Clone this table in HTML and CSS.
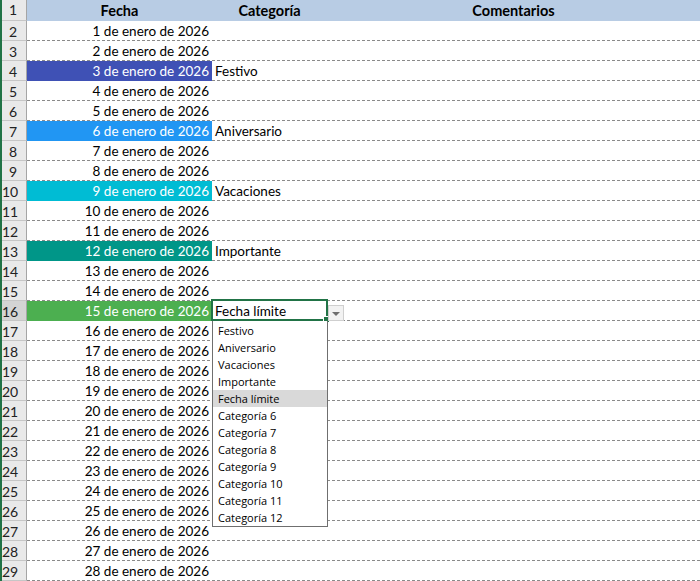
FILE: index.html
```html
<!DOCTYPE html>
<html lang="es">
<head>
<meta charset="utf-8">
<title>Calendario</title>
<link rel="stylesheet" href="styles.css">
</head>
<body>
<div class="page">
  <div class="sheet">
    <div class="row head"><div class="rh">1</div><div class="c date">Fecha</div><div class="c cat">Categoría</div><div class="c com">Comentarios</div></div>
    <div class="row"><div class="rh">2</div><div class="c date">1 de enero de 2026</div><div class="c cat"></div><div class="c com"></div></div>
    <div class="row"><div class="rh">3</div><div class="c date">2 de enero de 2026</div><div class="c cat"></div><div class="c com"></div></div>
    <div class="row"><div class="rh">4</div><div class="c date fill-indigo">3 de enero de 2026</div><div class="c cat">Festivo</div><div class="c com"></div></div>
    <div class="row"><div class="rh">5</div><div class="c date">4 de enero de 2026</div><div class="c cat"></div><div class="c com"></div></div>
    <div class="row"><div class="rh">6</div><div class="c date">5 de enero de 2026</div><div class="c cat"></div><div class="c com"></div></div>
    <div class="row"><div class="rh">7</div><div class="c date fill-blue">6 de enero de 2026</div><div class="c cat">Aniversario</div><div class="c com"></div></div>
    <div class="row"><div class="rh">8</div><div class="c date">7 de enero de 2026</div><div class="c cat"></div><div class="c com"></div></div>
    <div class="row"><div class="rh">9</div><div class="c date">8 de enero de 2026</div><div class="c cat"></div><div class="c com"></div></div>
    <div class="row"><div class="rh">10</div><div class="c date fill-cyan">9 de enero de 2026</div><div class="c cat">Vacaciones</div><div class="c com"></div></div>
    <div class="row"><div class="rh">11</div><div class="c date">10 de enero de 2026</div><div class="c cat"></div><div class="c com"></div></div>
    <div class="row"><div class="rh">12</div><div class="c date">11 de enero de 2026</div><div class="c cat"></div><div class="c com"></div></div>
    <div class="row"><div class="rh">13</div><div class="c date fill-teal">12 de enero de 2026</div><div class="c cat">Importante</div><div class="c com"></div></div>
    <div class="row"><div class="rh">14</div><div class="c date">13 de enero de 2026</div><div class="c cat"></div><div class="c com"></div></div>
    <div class="row"><div class="rh">15</div><div class="c date">14 de enero de 2026</div><div class="c cat"></div><div class="c com"></div></div>
    <div class="row sel"><div class="rh">16</div><div class="c date fill-green">15 de enero de 2026</div><div class="c cat">Fecha límite</div><div class="c com"></div></div>
    <div class="row"><div class="rh">17</div><div class="c date">16 de enero de 2026</div><div class="c cat"></div><div class="c com"></div></div>
    <div class="row"><div class="rh">18</div><div class="c date">17 de enero de 2026</div><div class="c cat"></div><div class="c com"></div></div>
    <div class="row"><div class="rh">19</div><div class="c date">18 de enero de 2026</div><div class="c cat"></div><div class="c com"></div></div>
    <div class="row"><div class="rh">20</div><div class="c date">19 de enero de 2026</div><div class="c cat"></div><div class="c com"></div></div>
    <div class="row"><div class="rh">21</div><div class="c date">20 de enero de 2026</div><div class="c cat"></div><div class="c com"></div></div>
    <div class="row"><div class="rh">22</div><div class="c date">21 de enero de 2026</div><div class="c cat"></div><div class="c com"></div></div>
    <div class="row"><div class="rh">23</div><div class="c date">22 de enero de 2026</div><div class="c cat"></div><div class="c com"></div></div>
    <div class="row"><div class="rh">24</div><div class="c date">23 de enero de 2026</div><div class="c cat"></div><div class="c com"></div></div>
    <div class="row"><div class="rh">25</div><div class="c date">24 de enero de 2026</div><div class="c cat"></div><div class="c com"></div></div>
    <div class="row"><div class="rh">26</div><div class="c date">25 de enero de 2026</div><div class="c cat"></div><div class="c com"></div></div>
    <div class="row"><div class="rh">27</div><div class="c date">26 de enero de 2026</div><div class="c cat"></div><div class="c com"></div></div>
    <div class="row"><div class="rh">28</div><div class="c date">27 de enero de 2026</div><div class="c cat"></div><div class="c com"></div></div>
    <div class="row"><div class="rh">29</div><div class="c date">28 de enero de 2026</div><div class="c cat"></div><div class="c com"></div></div>
  </div>

  <div class="selection"><span class="handle"></span></div>
  <div class="dd-button"><span class="dd-arrow"></span></div>
  <ul class="dd-list">
    <li>Festivo</li>
    <li>Aniversario</li>
    <li>Vacaciones</li>
    <li>Importante</li>
    <li class="active">Fecha límite</li>
    <li>Categoría 6</li>
    <li>Categoría 7</li>
    <li>Categoría 8</li>
    <li>Categoría 9</li>
    <li>Categoría 10</li>
    <li>Categoría 11</li>
    <li>Categoría 12</li>
  </ul>
</div>
</body>
</html>
```
FILE: styles.css
```css
html, body {
  margin: 0;
  padding: 0;
  background: #ffffff;
}

body {
  width: 700px;
  height: 581px;
  overflow: hidden;
  font-family: Lato, "Liberation Sans", sans-serif;
  font-size: 13.5px;
  color: #000000;
}

.page {
  position: relative;
  width: 700px;
  height: 581px;
}

.sheet {
  border-left: 2px solid #217346;
  height: 581px;
  box-sizing: border-box;
}

.row {
  display: flex;
  height: 20px;
  background: repeating-linear-gradient(to right, #8a8a8a 0 3px, transparent 3px 5px) left bottom / 100% 1px no-repeat;
}

.row.head {
  height: 21px;
  background: none;
}

.rh {
  flex: none;
  width: 25px;
  box-sizing: border-box;
  padding-right: 9px;
  padding-top: 1px;
  text-align: right;
  line-height: 20px;
  font-size: 14px;
  background: #e9e9e9;
  border-right: 1px solid #a5a5a5;
  border-bottom: 1px solid #c6c6c6;
  color: #222222;
}

.head .rh {
  padding-top: 0;
}

.row.sel .rh {
  background: #d4d4d4;
}

.c {
  box-sizing: border-box;
  height: 100%;
  line-height: 20px;
  white-space: nowrap;
  overflow: hidden;
}

.date {
  flex: none;
  width: 185px;
  text-align: right;
  padding-right: 3px;
}

.cat {
  flex: none;
  width: 115px;
  padding-left: 3px;
}

.com {
  flex: 1;
}

.head .c {
  background: #b8cce4;
  font-weight: bold;
  font-size: 14.5px;
  line-height: 21px;
  text-align: center;
  padding: 0;
}

.fill-indigo { background: #3f51b5; color: #ffffff; }
.fill-blue { background: #2196f3; color: #ffffff; }
.fill-cyan { background: #00bcd4; color: #ffffff; }
.fill-teal { background: #009688; color: #ffffff; }
.fill-green { background: #4caf50; color: #ffffff; }

.selection {
  position: absolute;
  left: 211px;
  top: 299px;
  width: 117px;
  height: 22px;
  box-sizing: border-box;
  border: 2px solid #217346;
}

.handle {
  position: absolute;
  right: -4px;
  bottom: -4px;
  width: 5px;
  height: 5px;
  background: #217346;
  border: 1px solid #ffffff;
  box-sizing: content-box;
}

.dd-button {
  position: absolute;
  left: 328px;
  top: 305px;
  width: 16px;
  height: 16px;
  box-sizing: border-box;
  border: 1px solid #cfcfcf;
  background: #f2f2f2;
  display: flex;
  align-items: center;
  justify-content: center;
}

.dd-arrow {
  width: 0;
  height: 0;
  border-left: 4px solid transparent;
  border-right: 4px solid transparent;
  border-top: 4px solid #6e6e6e;
  margin-top: 1px;
}

.dd-list {
  position: absolute;
  left: 212px;
  top: 321px;
  width: 116px;
  height: 206px;
  margin: 0;
  padding: 1px 0 0;
  list-style: none;
  box-sizing: border-box;
  border: 1px solid #6f6f6f;
  border-top: none;
  background: #ffffff;
  font-family: "Open Sans", "Noto Sans", sans-serif;
  font-size: 11px;
  color: #000000;
}

.dd-list li {
  height: 17px;
  line-height: 17px;
  padding-left: 5px;
  white-space: nowrap;
}

.dd-list li.active {
  background: #d9d9d9;
}
```
